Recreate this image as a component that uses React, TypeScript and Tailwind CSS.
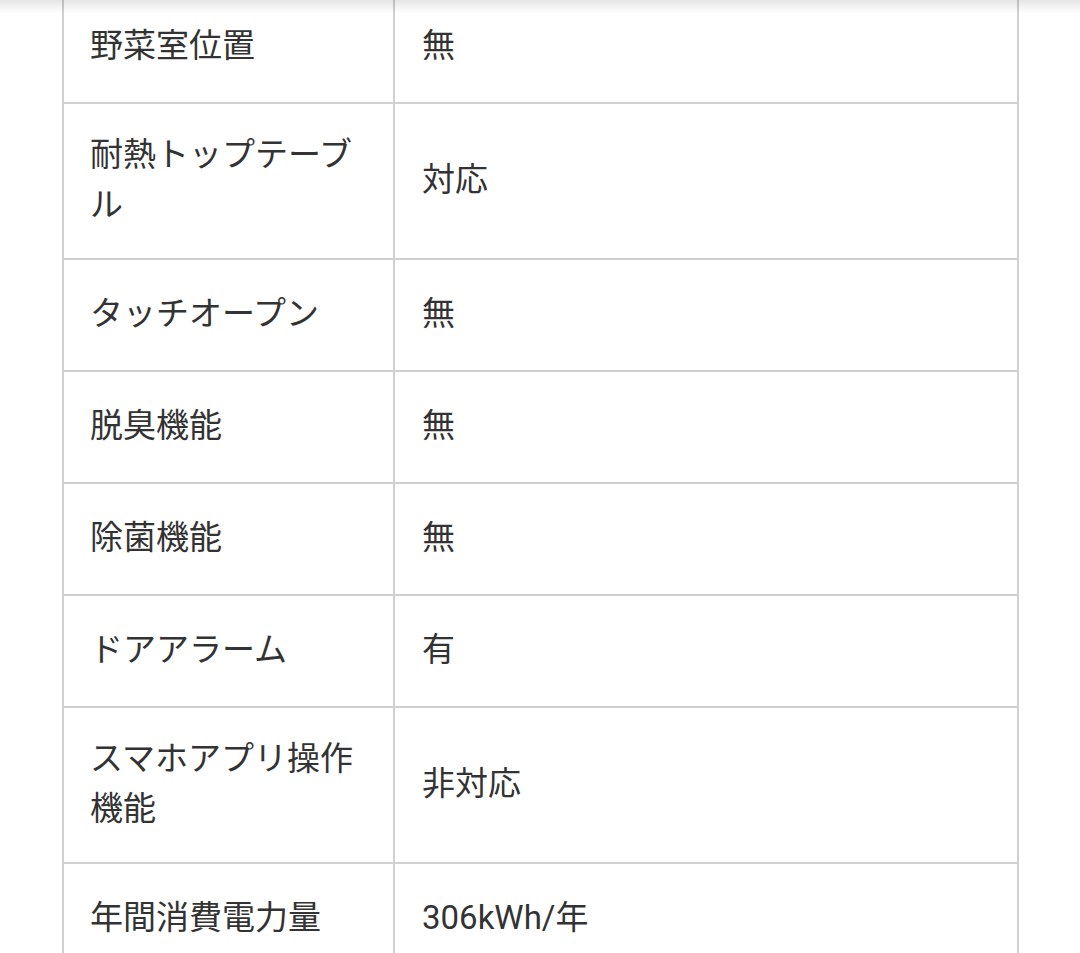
const rows: [string, string][] = [
  ["野菜室位置", "無"],
  ["耐熱トップテーブル", "対応"],
  ["タッチオープン", "無"],
  ["脱臭機能", "無"],
  ["除菌機能", "無"],
  ["ドアアラーム", "有"],
  ["スマホアプリ操作機能", "非対応"],
  ["年間消費電力量", "306kWh/年"],
];

export default function App() {
  return (
    <div
      className="relative h-[953px] overflow-hidden bg-white text-[#333333]"
      style={{ fontFamily: "Roboto, 'Noto Sans CJK JP', sans-serif" }}
    >
      <div className="ml-[62px] -mt-[8px] w-[957px] border-x-2 border-[#d0d0d0]">
        {rows.map(([label, value]) => (
          <div key={label} className="flex border-b-2 border-[#d0d0d0]">
            <div className="flex min-h-[110px] w-[331px] shrink-0 items-center border-r-2 border-[#d0d0d0] pt-[26px] pb-[28px] pl-[26px] pr-[20px] text-[33px] leading-[50px]">
              {label}
            </div>
            <div className="flex min-h-[110px] flex-1 items-center pt-[26px] pb-[28px] pl-[27px] pr-[24px] text-[33px] leading-[50px]">
              {value}
            </div>
          </div>
        ))}
      </div>
      <div className="pointer-events-none absolute inset-x-0 top-0 h-[14px] bg-linear-to-b from-black/10 to-transparent" />
    </div>
  );
}
